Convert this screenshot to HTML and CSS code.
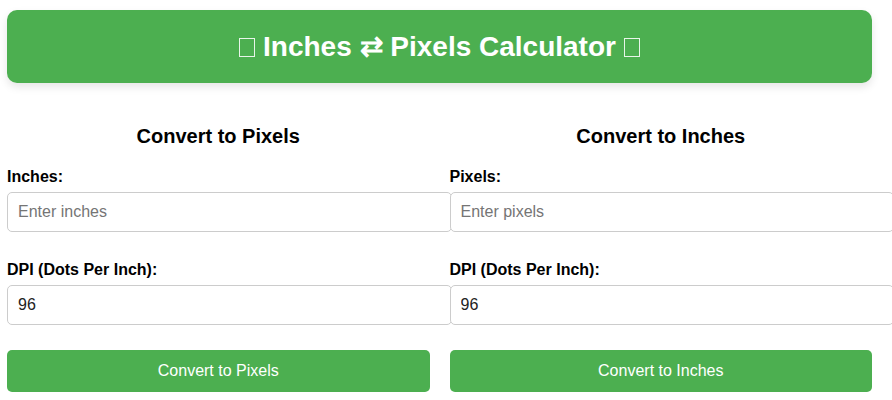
FILE: index.html
```html
<!DOCTYPE html>
<html lang="en">
<head>
    <meta charset="UTF-8">
    <meta name="viewport" content="width=device-width, initial-scale=1.0">
    <title>Inches ⇄ Pixels Calculator</title>
    <link rel="stylesheet" href="styles.css">
</head>
<body>

<div class="container">
    <h1 class="title"><span class="emoji">📏</span> Inches ⇄ Pixels Calculator <span class="emoji">📐</span></h1>

    <div class="columns">
        <div class="converter">
            <h2>Convert to Pixels</h2>
            <label for="inches">Inches:</label>
            <input type="number" id="inches" placeholder="Enter inches">
            <label for="dpi1">DPI (Dots Per Inch):</label>
            <input type="number" id="dpi1" value="96">
            <button onclick="toPixels()">Convert to Pixels</button>
        </div>

        <div class="converter">
            <h2>Convert to Inches</h2>
            <label for="pixels">Pixels:</label>
            <input type="number" id="pixels" placeholder="Enter pixels">
            <label for="dpi2">DPI (Dots Per Inch):</label>
            <input type="number" id="dpi2" value="96">
            <button onclick="toInches()">Convert to Inches</button>
        </div>
    </div>
</div>

<script>
    function toPixels() {
        const inches = parseFloat(document.getElementById('inches').value);
        const dpi = parseFloat(document.getElementById('dpi1').value);
        if (!isNaN(inches) && !isNaN(dpi)) {
            document.getElementById('pixels').value = (inches * dpi).toFixed(2);
        }
    }

    function toInches() {
        const pixels = parseFloat(document.getElementById('pixels').value);
        const dpi = parseFloat(document.getElementById('dpi2').value);
        if (!isNaN(pixels) && !isNaN(dpi) && dpi !== 0) {
            document.getElementById('inches').value = (pixels / dpi).toFixed(4);
        }
    }
</script>
</body>
</html>
```

FILE: styles.css
```css
* {
    margin: 0;
    padding: 0;
    font-family: 'Liberation Sans', Arial, sans-serif;
}

body {
    background-color: #fff;
    color: #000;
}

.container {
    width: 865px;
    margin: 10px 7px;
}

.title {
    background-color: #4CAF50;
    color: #fff;
    font-size: 28px;
    font-weight: bold;
    text-align: center;
    padding: 20px;
    border-radius: 10px;
    box-shadow: 0 4px 8px rgba(0, 0, 0, 0.1);
}

/* the emoji show up as empty glyph boxes in the original */
.title .emoji {
    display: inline-block;
    width: 14px;
    height: 17px;
    border: 1px solid #e8f5e9;
    color: transparent;
    overflow: hidden;
    font-size: 12px;
    line-height: 17px;
    vertical-align: -1px;
}

.columns {
    display: grid;
    grid-template-columns: 1fr 1fr;
    gap: 20px;
    margin-top: 42px;
}

.converter {
    display: flex;
    flex-direction: column;
}

.converter h2 {
    font-size: 20px;
    text-align: center;
    margin-bottom: 20px;
}

.converter label {
    font-size: 16px;
    font-weight: bold;
    margin-bottom: 6px;
}

.converter input {
    width: 100%;
    height: 18px;
    box-sizing: content-box;
    font-size: 16px;
    line-height: 18px;
    padding: 10px;
    border: 1px solid #ccc;
    border-radius: 5px;
    margin-bottom: 29px;
    color: #222;
}

.converter input::placeholder {
    color: #757575;
}

.converter input:last-of-type {
    margin-bottom: 25px;
}

.converter button {
    background-color: #4CAF50;
    color: #fff;
    border: none;
    font-size: 16px;
    line-height: 18px;
    padding: 12px;
    border-radius: 5px;
    cursor: pointer;
}

.converter button:hover {
    background-color: #45a049;
}
```
